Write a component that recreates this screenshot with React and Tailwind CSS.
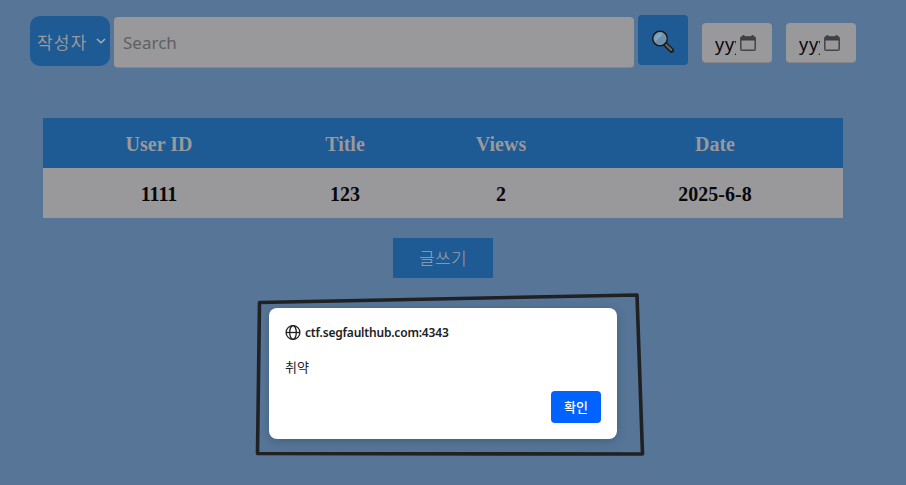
const columns = [
  { label: 'User ID', value: '1111' },
  { label: 'Title', value: '123' },
  { label: 'Views', value: '2' },
  { label: 'Date', value: '2025-6-8' },
];

function Magnifier() {
  return (
    <svg className="-ml-px" width="24" height="24" viewBox="0 0 24 24" fill="none">
      <path d="M14.5 14.5L20.5 20.3" stroke="#161a1d" strokeWidth="5" strokeLinecap="round" />
      <path d="M14.7 14.5L20.3 19.8" stroke="#666462" strokeWidth="2.4" strokeLinecap="round" />
      <circle cx="9" cy="8.5" r="7.2" fill="#6b8fae" stroke="#171b20" strokeWidth="1.6" />
      <circle cx="9" cy="8.5" r="6" stroke="#8d969c" strokeWidth="0.8" />
      <path d="M4.5 11.5L12 4A5.5 5.5 0 0 0 4.5 11.5Z" fill="#86a5be" />
    </svg>
  );
}

function DateField() {
  return (
    <div className="mt-2 flex h-10 w-[70px] items-center rounded-[4px] border-b border-[#858689] bg-[#99999b] pl-[13px]">
      <span className="w-[21px] overflow-hidden whitespace-nowrap pt-0.5 font-['Noto_Sans',sans-serif] text-[18px] leading-6 tracking-[0.7px] text-[#08080b]">
        yyyy
      </span>
      <svg className="ml-1" width="16" height="16" viewBox="0 0 16 16" fill="none">
        <path d="M1 1.5H15V5.5H1Z" fill="#3f3f43" />
        <path d="M3.5 0V3M12.5 0V3" stroke="#3f3f43" strokeWidth="1.8" />
        <rect x="0.8" y="2" width="14.4" height="13.2" rx="1.3" stroke="#444448" strokeWidth="1.5" />
      </svg>
    </div>
  );
}

function Globe() {
  return (
    <svg width="16" height="16" viewBox="0 0 16 16" fill="none" stroke="#202124" strokeWidth="1.3">
      <circle cx="8" cy="7.5" r="6.9" />
      <ellipse cx="8" cy="7.5" rx="3.3" ry="6.9" />
      <path d="M1.3 7.5H14.7" />
    </svg>
  );
}

export default function App() {
  return (
    <div className="relative h-[485px] w-[906px] overflow-hidden bg-[#577597] font-['Noto_Sans','Noto_Sans_CJK_KR',sans-serif]">
      <div className="flex h-[103px] items-start pl-[30px] pt-[15px]">
        <button className="mt-px flex h-[50px] w-20 items-center rounded-[10px] bg-[#1e5a94] pl-[7px] text-[#99999b]">
          <span className="w-[53px] whitespace-nowrap pt-0.5 text-left font-['Noto_Sans_CJK_KR',sans-serif] text-[17px] font-normal leading-6 tracking-[1.2px]">
            작성자
          </span>
          <svg className="ml-[6px]" width="10" height="6" viewBox="0 0 10 6" fill="none">
            <path d="M1 1L5 4.8L9 1" stroke="#aaaeb2" strokeWidth="1.5" />
          </svg>
        </button>
        <div className="ml-1 mt-[2px] flex h-[51px] w-[520px] items-center rounded-[4px] border-b border-[#858689] bg-[#99999b] pl-[9px] pt-px text-[17px] text-[#5f5f63]">
          Search
        </div>
        <button className="ml-1 flex h-[50px] w-[50px] items-center justify-center rounded-[4px] bg-[#1e5a94] pt-[3px]">
          <Magnifier />
        </button>
        <div className="ml-[14px] flex gap-[14px]">
          <DateField />
          <DateField />
        </div>
      </div>

      <table className="ml-[43px] mt-[15px] w-[800px] table-fixed border-collapse text-center font-['Liberation_Serif',serif] text-[20px] font-bold leading-[30px]">
        <colgroup>
          <col className="w-[232px]" />
          <col className="w-[140px]" />
          <col className="w-[172px]" />
          <col className="w-[256px]" />
        </colgroup>
        <thead>
          <tr className="h-[50px] bg-[#1e5a94] text-[#99999b]">
            {columns.map((c) => (
              <th key={c.label} className="p-0 pt-0.5">{c.label}</th>
            ))}
          </tr>
        </thead>
        <tbody>
          <tr className="h-[50px] bg-[#99999b] text-[#08080b]">
            {columns.map((c) => (
              <td key={c.label} className="p-0 pt-0.5">{c.value}</td>
            ))}
          </tr>
        </tbody>
      </table>

      <button className="ml-[393px] mt-5 flex h-10 w-[100px] items-center justify-center bg-[#1e5a94] font-['Noto_Sans_CJK_KR',sans-serif] text-[17px] font-light tracking-[0.4px] text-[#a0a2a6]">
        글쓰기
      </button>

      <div className="ml-[269px] mt-[30px] flex h-[131px] w-[348px] flex-col rounded-[8px] bg-white px-4 pb-4 pt-4 text-[#202124] shadow-[0_2px_10px_rgba(35,65,85,0.4)]">
        <div className="flex h-[17px] items-center gap-1">
          <Globe />
          <span className="text-[12px] font-semibold leading-4 tracking-[-0.19px]">ctf.segfaulthub.com:4343</span>
        </div>
        <div className="mt-[18px] font-['Noto_Sans_CJK_KR',sans-serif] text-[13px] leading-4">취약</div>
        <button className="ml-auto mt-auto h-8 w-[50px] rounded-[4px] bg-[#0062ff] font-['Noto_Sans_CJK_KR',sans-serif] text-[13px] font-medium leading-8 text-white">
          확인
        </button>
      </div>

      <svg className="pointer-events-none absolute left-0 top-0" width="906" height="485" fill="none">
        <path d="M259.5 302.5L637 295L642.5 454L257.5 453.5Z" stroke="#202122" strokeWidth="3.6" strokeLinejoin="round" />
      </svg>
    </div>
  );
}
